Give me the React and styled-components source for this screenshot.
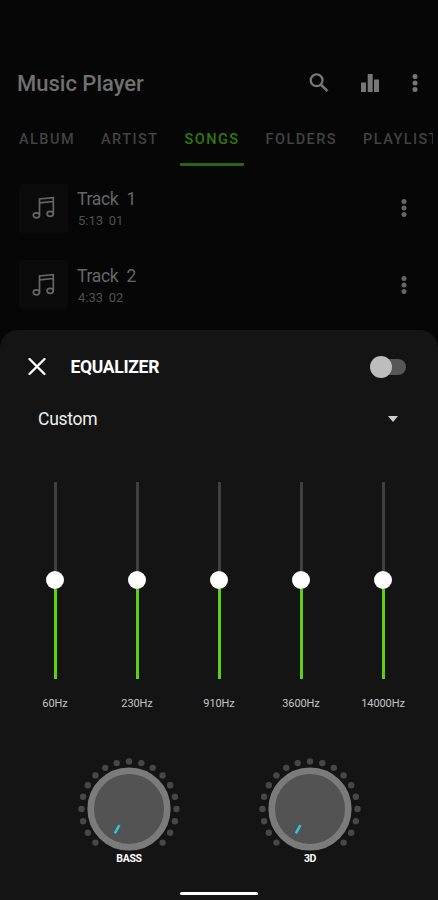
import React from "react";
import styled, { createGlobalStyle } from "styled-components";

const GlobalStyle = createGlobalStyle`
  * {
    box-sizing: border-box;
  }
  body {
    margin: 0;
    background: #060606;
    font-family: Roboto, "Liberation Sans", sans-serif;
  }
`;

const Screen = styled.div`
  width: 438px;
  height: 900px;
  display: flex;
  flex-direction: column;
  overflow: hidden;
  background: #060606;
`;

const Player = styled.main`
  height: 330px;
  padding-top: 62px;
  flex: none;
`;

const Toolbar = styled.header`
  height: 42px;
  display: flex;
  align-items: center;
  padding: 0 19px 0 17px;
  color: #777;
  svg {
    display: block;
  }
`;

const Title = styled.h1`
  flex: 1;
  margin: 0;
  padding-top: 1px;
  font-size: 22px;
  font-weight: 500;
  line-height: 42px;
  color: #707070;
`;

const ToolbarIcons = styled.div`
  display: flex;
  align-items: center;
`;

const SearchIcon = styled.svg`
  margin-right: 31px;
`;

const ChartIcon = styled.svg`
  margin-right: 31px;
`;

const Tabs = styled.nav`
  height: 62px;
  display: flex;
  padding: 13px 0 0 14px;
  gap: 17px;
  overflow: hidden;
  margin-right: 5px;
`;

const Tab = styled.div`
  flex: none;
  height: 49px;
  padding: 0 4px 0 5px;
  border-bottom: 3px solid ${props => (props.$active ? "#2b6310" : "transparent")};
  border-radius: 1px;
  color: ${props => (props.$active ? "#2f7a0c" : "#424242")};
  font-size: 14.5px;
  font-weight: 500;
  line-height: 46px;
  letter-spacing: 1.45px;
`;

const TrackList = styled.ul`
  list-style: none;
  margin: 0;
  padding: 4px 0 0;
`;

const TrackRow = styled.li`
  height: 76.5px;
  padding: 0 30px 0 19px;
  display: flex;
  align-items: center;
  color: #666;
`;

const Cover = styled.div`
  width: 49px;
  height: 49px;
  border-radius: 4px;
  background: #0b0b0b;
  display: flex;
  align-items: center;
  justify-content: center;
`;

const TrackInfo = styled.div`
  flex: 1;
  padding: 4px 0 0 9px;
`;

const TrackName = styled.div`
  font-size: 17.5px;
  line-height: 21px;
  letter-spacing: -0.3px;
  word-spacing: 4px;
  color: #666;
`;

const TrackMeta = styled.div`
  padding-left: 1px;
  font-size: 13px;
  line-height: 21px;
  word-spacing: 2.5px;
  color: #505050;
`;

const Sheet = styled.section`
  flex: 1;
  display: flex;
  flex-direction: column;
  background: #141414;
  border-radius: 18px 18px 0 0;
  color: #fff;
`;

const SheetHeader = styled.div`
  height: 73px;
  display: flex;
  align-items: center;
  padding: 0 32px 0 28px;
`;

const SheetTitle = styled.h2`
  flex: 1;
  margin: 0 0 0 24.5px;
  font-size: 17.5px;
  font-weight: 700;
  letter-spacing: -0.3px;
  line-height: 24px;
`;

const Switch = styled.div`
  width: 36px;
  height: 16px;
  display: flex;
  align-items: center;
  justify-content: flex-start;
  border-radius: 8px;
  background: linear-gradient(90deg, transparent 11px, #575757 11px);
`;

const SwitchThumb = styled.span`
  flex: none;
  width: 22px;
  height: 22px;
  border-radius: 50%;
  background: #bdbdbd;
`;

const Preset = styled.div`
  height: 32px;
  display: flex;
  align-items: center;
  justify-content: space-between;
  padding: 0 40px 0 38px;
  font-size: 17.5px;
  letter-spacing: -0.25px;
  color: #eee;
`;

const Caret = styled.span`
  border: 5.5px solid transparent;
  border-top: 6px solid #ccc;
  border-bottom-width: 0;
`;

const Bands = styled.div`
  display: grid;
  grid-template-columns: repeat(5, 82px);
  padding: 47px 0 0 14px;
`;

const Band = styled.div`
  display: flex;
  flex-direction: column;
  align-items: center;
`;

const BandTrack = styled.div`
  height: 197px;
  display: flex;
  flex-direction: column;
  align-items: center;
`;

const BandRest = styled.span`
  flex: 1;
  width: 3px;
  background: #404040;
`;

const BandLevel = styled.span`
  width: 3px;
  background: #5bd10f;
`;

const BandThumb = styled.span`
  width: 18px;
  height: 18px;
  border-radius: 50%;
  background: #fff;
`;

const BandLabel = styled.span`
  margin-top: 17px;
  font-size: 11px;
  line-height: 16px;
  letter-spacing: -0.1px;
  color: #c4c4c4;
`;

const Knobs = styled.div`
  display: flex;
  gap: 81px;
  padding: 46px 0 0 79px;
`;

const KnobCell = styled.div`
  width: 100px;
  display: flex;
  flex-direction: column;
  align-items: center;
  svg {
    display: block;
  }
`;

const KnobLabel = styled.span`
  font-size: 10.5px;
  font-weight: 700;
  line-height: 14px;
  letter-spacing: -0.3px;
  margin-top: -8px;
`;

const HomeBar = styled.div`
  width: 78px;
  height: 3px;
  margin: auto auto 5px;
  border-radius: 2px;
  background: #fff;
`;

const tabs = [
  { name: "ALBUM" },
  { name: "ARTIST" },
  { name: "SONGS", active: true },
  { name: "FOLDERS" },
  { name: "PLAYLISTS" }
];

const tracks = [
  { name: "Track 1", meta: "5:13 01" },
  { name: "Track 2", meta: "4:33 02" }
];

const bands = [
  { label: "60Hz", level: 90 },
  { label: "230Hz", level: 90 },
  { label: "910Hz", level: 90 },
  { label: "3600Hz", level: 90 },
  { label: "14000Hz", level: 90 }
];

// dots run from -135 to 135 degrees in steps of 15
const knobDots = Array.from({ length: 19 }, (_, i) => {
  const angle = ((i * 15 - 135) * Math.PI) / 180;
  return { x: 50 + 47.5 * Math.sin(angle), y: 50 - 47.5 * Math.cos(angle) };
});

const MoreIcon = () => (
  <svg width="8" height="22" viewBox="0 0 8 22" fill="currentColor">
    <circle cx="4" cy="4.5" r="2.5" />
    <circle cx="4" cy="11" r="2.5" />
    <circle cx="4" cy="17.5" r="2.5" />
  </svg>
);

const NoteIcon = () => (
  <svg
    width="24"
    height="24"
    viewBox="0 0 24 24"
    fill="none"
    stroke="currentColor"
    strokeWidth="1.7"
  >
    <ellipse cx="4.4" cy="19.3" rx="3.1" ry="2.5" />
    <ellipse cx="18.2" cy="17.8" rx="3.1" ry="2.5" />
    <path d="M7.5 19.3V3L21.3 1.7V17.8M7.5 6.8L21.3 5.5" />
  </svg>
);

const Knob = ({ label }) => (
  <KnobCell>
    <svg width="102" height="102" viewBox="-1 -1 102 102">
      {knobDots.map((dot, i) => (
        <circle key={i} cx={dot.x} cy={dot.y} r="3.2" fill="#474747" />
      ))}
      <circle cx="50" cy="50" r="38.3" fill="#535353" stroke="#7b7b7b" strokeWidth="6.6" />
      <path d="M40.4 66.1L35.8 74.3" stroke="#28c9dc" strokeWidth="2.5" />
    </svg>
    <KnobLabel>{label}</KnobLabel>
  </KnobCell>
);

export default function App() {
  return (
    <>
      <GlobalStyle />
      <Screen>
        <Player>
          <Toolbar>
            <Title>Music Player</Title>
            <ToolbarIcons>
              <SearchIcon width="20" height="20" viewBox="0 0 20 20" fill="none" stroke="currentColor">
                <circle cx="7.6" cy="7.3" r="5.9" strokeWidth="2.3" />
                <path d="M11.8 11.5L18.5 18.2" strokeWidth="2.6" />
              </SearchIcon>
              <ChartIcon width="20" height="20" viewBox="0 0 20 20" fill="currentColor">
                <path d="M1 9.5h5V19H1zM7.7 1h5v18h-5zM14 6.5h5V19h-5z" />
              </ChartIcon>
              <MoreIcon />
            </ToolbarIcons>
          </Toolbar>
          <Tabs>
            {tabs.map(t => (
              <Tab key={t.name} $active={t.active}>
                {t.name}
              </Tab>
            ))}
          </Tabs>
          <TrackList>
            {tracks.map(t => (
              <TrackRow key={t.name}>
                <Cover>
                  <NoteIcon />
                </Cover>
                <TrackInfo>
                  <TrackName>{t.name}</TrackName>
                  <TrackMeta>{t.meta}</TrackMeta>
                </TrackInfo>
                <MoreIcon />
              </TrackRow>
            ))}
          </TrackList>
        </Player>
        <Sheet>
          <SheetHeader>
            <svg width="18" height="18" viewBox="0 0 18 18" stroke="#fff" strokeWidth="2.3" strokeLinecap="round">
              <path d="M1.5 1L16.5 16M16.5 1L1.5 16" />
            </svg>
            <SheetTitle>EQUALIZER</SheetTitle>
            <Switch>
              <SwitchThumb />
            </Switch>
          </SheetHeader>
          <Preset>
            Custom
            <Caret />
          </Preset>
          <Bands>
            {bands.map(b => (
              <Band key={b.label}>
                <BandTrack>
                  <BandRest />
                  <BandThumb />
                  <BandLevel style={{ height: b.level }} />
                </BandTrack>
                <BandLabel>{b.label}</BandLabel>
              </Band>
            ))}
          </Bands>
          <Knobs>
            <Knob label="BASS" />
            <Knob label="3D" />
          </Knobs>
          <HomeBar />
        </Sheet>
      </Screen>
    </>
  );
}
